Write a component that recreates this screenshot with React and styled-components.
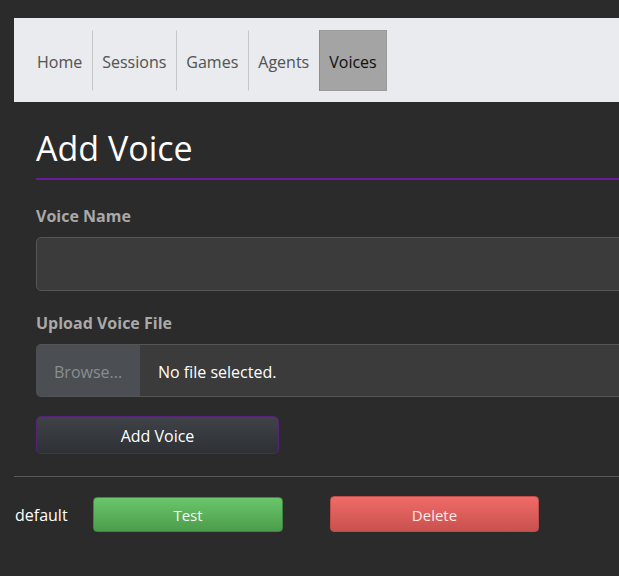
import React from "react";
import styled, { createGlobalStyle } from "styled-components";

const Global = createGlobalStyle`
  html, body {
    margin: 0;
    padding: 0;
    background: #2b2b2b;
    overflow: hidden;
  }
  body {
    font-family: "Open Sans", "Noto Sans", sans-serif;
    color: #eee;
  }
`;

const Page = styled.div`
  padding: 18px 0 0 14px;
  width: 720px;
  box-sizing: border-box;
`;

const Nav = styled.nav`
  height: 84px;
  box-sizing: border-box;
  background: #e9ebee;
  padding: 12px 0 11px 13px;
`;

const NavList = styled.ul`
  display: flex;
  list-style: none;
  margin: 0;
  padding: 0;
  height: 100%;
`;

const NavItem = styled.li`
  padding: 3px 9px 0;
  line-height: 56px;
  font-size: 16px;
  color: ${(p) => (p.$active ? "#111" : "#555")};
  background: ${(p) => (p.$active ? "#a4a4a4" : "transparent")};
  border: 1px solid transparent;
  border-left-color: ${(p) => (p.$first ? "transparent" : p.$active ? "#8c8c8c" : "#c5c7ca")};
  border-right-color: ${(p) => (p.$active ? "#9a9a9a" : "transparent")};
  border-top-color: ${(p) => (p.$active ? "#9a9a9a" : "transparent")};
  border-bottom-color: ${(p) => (p.$active ? "#9a9a9a" : "transparent")};
  text-shadow: 0 0 1px rgba(0, 0, 0, 0.08);
`;

const Content = styled.div`
  padding-left: 22px;
`;

const Title = styled.h1`
  margin: 24px 0 0;
  padding-bottom: 8px;
  border-bottom: 2px solid #6a1b9a;
  font-size: 34px;
  line-height: 44px;
  font-weight: 400;
  color: #fff;
`;

const Label = styled.label`
  display: block;
  font-size: 16px;
  line-height: 22px;
  padding-top: 1px;
  font-weight: 700;
  color: #a9a9a9;
  margin-top: ${(p) => p.$top}px;
  margin-bottom: ${(p) => p.$bottom}px;
`;

const TextInput = styled.div`
  height: 54px;
  box-sizing: border-box;
  background: #3b3b3b;
  border: 1px solid #555;
  border-radius: 5px;
`;

const FileRow = styled.div`
  display: flex;
  height: 53px;
  box-sizing: border-box;
  background: #3b3b3b;
  border: 1px solid #555;
  border-left: none;
  border-radius: 5px;
  overflow: hidden;
`;

const Browse = styled.div`
  width: 104px;
  flex: none;
  background: #4b4f53;
  color: #8a8d90;
  font-size: 16px;
  display: flex;
  align-items: center;
  padding: 2px 0 0 18px;
  box-sizing: border-box;
`;

const FileName = styled.div`
  display: flex;
  align-items: center;
  padding: 2px 0 0 18px;
  font-size: 16px;
  color: #fff;
`;

const SubmitButton = styled.button`
  display: block;
  margin-top: 19px;
  width: 243px;
  height: 38px;
  box-sizing: border-box;
  border: 1px solid #55247a;
  border-radius: 5px;
  background: linear-gradient(#3f4348, #2d3034);
  color: #fff;
  font-family: inherit;
  font-size: 16px;
  padding: 2px 0 0;
`;

const Divider = styled.hr`
  margin: 22px 0 0;
  border: none;
  border-top: 1px solid #5a5a5a;
  height: 0;
`;

const VoiceRow = styled.div`
  display: flex;
  align-items: center;
  margin-top: 19px;
  padding-left: 1px;
`;

const VoiceName = styled.div`
  width: 78px;
  font-size: 16px;
  padding-top: 2px;
  color: #fff;
`;

const ActionButton = styled.button`
  width: ${(p) => p.$w}px;
  height: ${(p) => p.$h}px;
  margin-right: ${(p) => p.$mr || 0}px;
  box-sizing: border-box;
  border-radius: 4px;
  font-family: inherit;
  font-size: 15px;
  padding: 1px 0 0;
  color: ${(p) => (p.$kind === "danger" ? "#fbe9e9" : "#f2f8f2")};
  border: 1px solid ${(p) => (p.$kind === "danger" ? "#c04c4b" : "#3f873f")};
  background: ${(p) =>
    p.$kind === "danger"
      ? "linear-gradient(#f06b67, #c8514f)"
      : "linear-gradient(#6ac66a, #4b9d4b)"};
`;

const navItems = ["Home", "Sessions", "Games", "Agents", "Voices"];

export default function App() {
  return (
    <>
      <Global />
      <Page>
        <Nav>
          <NavList>
            {navItems.map((n, i) => (
              <NavItem key={n} $first={i === 0} $active={n === "Voices"}>
                {n}
              </NavItem>
            ))}
          </NavList>
        </Nav>
        <Content>
          <Title>Add Voice</Title>
          <Label $top={24} $bottom={10}>Voice Name</Label>
          <TextInput />
          <Label $top={20} $bottom={10}>Upload Voice File</Label>
          <FileRow>
            <Browse>Browse...</Browse>
            <FileName>No file selected.</FileName>
          </FileRow>
          <SubmitButton>Add Voice</SubmitButton>
        </Content>
        <Divider />
        <VoiceRow>
          <VoiceName>default</VoiceName>
          <ActionButton $w={190} $h={35} $mr={47}>Test</ActionButton>
          <ActionButton $w={209} $h={36} $kind="danger">Delete</ActionButton>
        </VoiceRow>
      </Page>
    </>
  );
}
